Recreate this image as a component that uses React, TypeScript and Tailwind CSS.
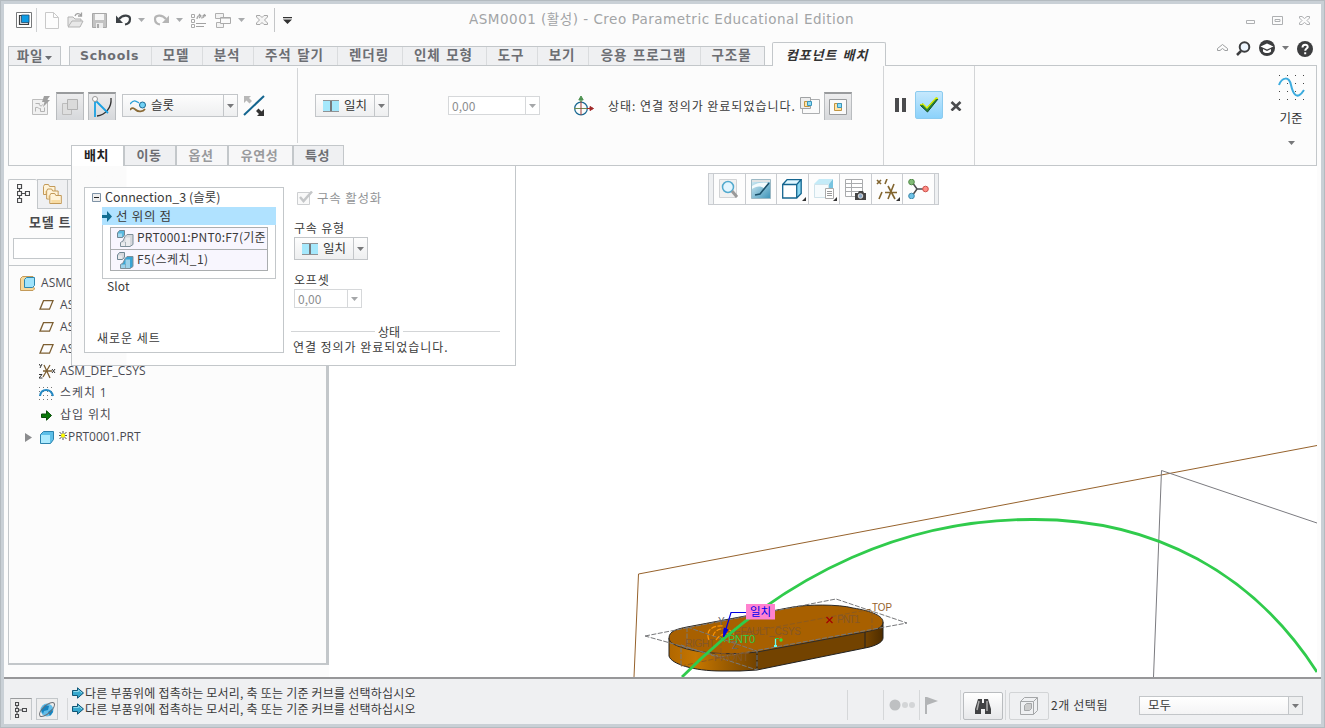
import React from "react";

const KR = "font-['Noto_Sans_CJK_KR',sans-serif]";

type IconProps = { w: number; h: number; className?: string; children: React.ReactNode };
function Icon({ w, h, className = "", children }: IconProps) {
  return (
    <svg width={w} height={h} viewBox={`0 0 ${w} ${h}`} fill="none" className={`shrink-0 ${className}`}>
      {children}
    </svg>
  );
}

function Caret({ color = "#77787a", className = "" }: { color?: string; className?: string }) {
  return (
    <Icon w={7} h={4} className={className}>
      <path d="M0 0h7L3.500 4z" fill={color} />
    </Icon>
  );
}

function QuickAccess() {
  return (
    <div className="flex h-8 items-center">
      <Icon w={16} h={16} className="ml-3">
        <path d="M.5.5h15v15H.5z" stroke="#77797b" fill="#fff" />
        <path d="M3.500 3.500h9v9h-9z" stroke="#3c3e40" strokeWidth="1.200" fill="#d8dadc" />
        <path d="M5.500 3h7.500v7.500H5.500z" fill="#0c9be4" stroke="#1d4d70" strokeWidth=".8" />
      </Icon>
      <div className="ml-1 h-6 w-px bg-[#cfd1d3]" />
      <Icon w={14} h={17} className="ml-2">
        <path d="M.5.5h8l5 5v11H.5z" stroke="#c9c9c9" fill="#fdfdfd" />
        <path d="M8.500.5v5h5" stroke="#c9c9c9" />
      </Icon>
      <Icon w={17} h={16} className="ml-2">
        <path d="M1 14V5h5l2 2h6v2M1 15l4-6h11l-3 6z" stroke="#b3b3b3" fill="#e8e8e8" />
        <path d="M8 4c1-3 4-3 6-1M14.500.5v3.500h-3.500" stroke="#a0a0a0" strokeWidth="1.300" />
      </Icon>
      <Icon w={15} h={15} className="ml-2">
        <path d="M.5.5h14v14H.5z" stroke="#a8a8a8" fill="#c3c3c3" />
        <path d="M3 1h9v6H3z" fill="#f6f6f6" />
        <path d="M4 10h7v5H4z" fill="#eee" />
        <path d="M5 11h2v4H5z" fill="#aaa" />
      </Icon>
      <Icon w={16} h={12} className="ml-[9px]">
        <path d="M3 5c4-5 11-4 11 0 0 3-2 5-5 5.500" stroke="#3c4145" strokeWidth="2.200" />
        <path d="M0 1.500v7.500h7z" fill="#3c4145" />
      </Icon>
      <Caret color="#a9abad" className="ml-[6px]" />
      <Icon w={16} h={12} className="ml-2">
        <path d="M13 5C9 0 2 1 2 5c0 3 2 5 5 5.500" stroke="#b5b5b5" strokeWidth="2.200" />
        <path d="M16 1.500v7.500H9z" fill="#b5b5b5" />
      </Icon>
      <Caret color="#a9abad" className="ml-[7px]" />
      <Icon w={15} h={15} className="ml-[8px]">
        <path d="M.5 1.500h3v3h-3zM.5 6.500h3v3h-3zM.5 11.500h3v3h-3z" stroke="#aaa" />
        <path d="M5 10.500h10M5 13.500h8M6 6c0-3 2-4 4-3M8 1l2 2-2 2M13.500 1.500c0 3-1 3.500-3.500 3.500M11.500 3.500l2-2 2 2" stroke="#a2a2a2" strokeWidth="1.200" />
      </Icon>
      <Icon w={16} h={15} className="ml-[9px]">
        <path d="M.5.5h8v5h-8zM1.500 9.500h7v5h-7z" stroke="#b0b0b0" fill="#f3f3f3" />
        <path d="M5.500 4.500h10v6h-10z" stroke="#aaa" fill="#fafafa" />
        <path d="M6 5.500h9" stroke="#ccc" />
      </Icon>
      <Caret color="#a9abad" className="ml-[7px]" />
      <Icon w={12} h={10} className="ml-[11px]">
        <path d="M.5.5h3.500l2 2 2-2h3.500v1.500L8.500 5l3 3v1.500H8l-2-2-2 2H.5V8l3-3-3-3z" stroke="#a7a7a7" fill="#f5f5f5" />
      </Icon>
      <div className="ml-[6px] h-6 w-px bg-[#c4c6c8]" />
      <Icon w={9} h={7} className="ml-2">
        <path d="M0 0h9v1.200H0zM0 2.500h9L4.500 7z" fill="#333" />
      </Icon>
    </div>
  );
}

function TitleBar() {
  return (
    <div className="flex h-[38px] shrink-0">
      <div className="w-[465px]"><QuickAccess /></div>
      <div className="h-8 whitespace-nowrap font-['DejaVu_Sans','Noto_Sans_CJK_KR',sans-serif] text-[13.5px] leading-[31px] tracking-[0.5px] text-[#a2a4a6]">
        ASM0001 (활성) - Creo Parametric Educational Edition
      </div>
      <div className="ml-auto mr-[11px] flex h-8 items-center">
        <Icon w={10} h={10}><path d="M.5 5.500h8v3h-8z" stroke="#aeb0b2" /></Icon>
        <Icon w={11} h={9} className="ml-4"><path d="M.5.5h10v8H.5zM3 3.500h5v2H3z" stroke="#aeb0b2" /></Icon>
        <Icon w={11} h={9} className="ml-4">
          <path d="M.5.5H3l2.500 2L8 .5h2.500v1.500L8 4.500l2.500 2.500v1.500H8l-2.500-2-2.500 2H.5V7L3 4.500.5 2z" stroke="#aeb0b2" />
        </Icon>
      </div>
    </div>
  );
}

const tabs: [string, string][] = [
  ["Schools", "w-[81px]"],
  ["모델", "w-[51px]"],
  ["분석", "w-[51px]"],
  ["주석 달기", "w-[84px]"],
  ["렌더링", "w-[65px]"],
  ["인체 모형", "w-[84px]"],
  ["도구", "w-[51px]"],
  ["보기", "w-[51px]"],
  ["응용 프로그램", "w-[112px]"],
  ["구조물", "w-[64px]"],
];

function TabRow() {
  return (
    <div className="z-10 -mb-px ml-1 flex h-6 shrink-0 items-end whitespace-nowrap font-['DejaVu_Sans','Noto_Sans_CJK_KR',sans-serif] text-[13.5px] font-bold tracking-[0.9px] text-[#6c6e73]">
      <div className="flex h-5 w-[53px] items-center justify-center gap-[2px] border border-[#c3c7ca] bg-[#eff0f2] leading-[18px]">
        파일 <Caret color="#6c6e73" className="mt-[3px]" />
      </div>
      <div className="ml-2 flex h-5 border border-[#c3c7ca] bg-[#eff0f2]">
        {tabs.map(([t, w], i) => (
          <div key={t} className={`${w} pr-[2px] text-center leading-[17px] ${i ? "border-l border-[#dadcde]" : "text-[12.5px] tracking-[0.7px]"}`}>{t}</div>
        ))}
      </div>
      <div className="ml-[7px] h-6 w-[114px] rounded-t-[2px] border border-b-0 border-[#c3c7ca] bg-[#fcfcfc] pr-1 text-center text-[13px] italic leading-[25px] text-[#333]">
        컴포넌트 배치
      </div>
      <div className="mb-[10px] ml-auto mr-2 flex h-4 items-center">
        <Icon w={11} h={7} className="mb-[2px]"><path d="M.5 6.500v-2l5-4 5 4v2H8l-2.500-2-2.500 2z" stroke="#9d9fa1" /></Icon>
        <Icon w={15} h={15} className="ml-2">
          <circle cx="8.500" cy="6" r="4.800" stroke="#3c3d3f" strokeWidth="2" fill="#eef6ff" />
          <path d="M5 10l-4 4" stroke="#3c3d3f" strokeWidth="2.500" />
        </Icon>
        <Icon w={16} h={16} className="ml-2">
          <circle cx="8" cy="8" r="8" fill="#3c3d3f" />
          <path d="M1.500 6.500L8 3.500l6.500 3L8 9.500zM4 9v2.500c2 2 6 2 8 0V9L8 11z" fill="#fff" />
        </Icon>
        <Caret className="ml-[7px]" />
        <Icon w={16} h={16} className="ml-2 mt-[2px]">
          <circle cx="8" cy="8" r="8" fill="#3c3d3f" />
          <path d="M5.500 6.500c0-4 5.500-3.500 5.200-.5C10.500 7.500 8.200 7.800 8.200 9.800M8.200 11.200v2" stroke="#fff" strokeWidth="2" />
        </Icon>
      </div>
    </div>
  );
}

function MatchIcon() {
  return (
    <Icon w={16} h={12}>
      <path d="M0 0h16v12H0z" fill="#a5e8fc" />
      <path d="M0 .5h16M0 11.500h16" stroke="#909294" />
      <path d="M8 1v10" stroke="#76797c" strokeWidth="2" />
    </Icon>
  );
}

function Combo({ w, icon, text }: { w: string; icon: React.ReactNode; text: string }) {
  return (
    <div className={`flex h-[23px] shrink-0 ${w} items-center whitespace-nowrap border border-[#c3c6c9] bg-linear-to-b from-[#fdfdfd] to-[#eeeff0] pl-[7px] text-[12.5px] leading-5 text-[#333]`}>
      {icon}
      <span className="-mt-px ml-[5px]">{text}</span>
      <span className="ml-auto flex h-full w-[14px] items-center justify-center border-l border-[#c3c6c9]"><Caret /></span>
    </div>
  );
}

function NumberField({ w }: { w: string }) {
  return (
    <div className={`flex h-[19px] shrink-0 ${w} items-center border border-[#d6d8da] bg-white pl-[3px] text-[12px] leading-4 text-[#8c8e90]`}>
      0,00
      <span className="ml-auto flex h-full w-[14px] items-center justify-center border-l border-[#d6d8da]"><Caret color="#a5a7a9" /></span>
    </div>
  );
}

const pressed = "flex h-7 w-7 shrink-0 items-center justify-center border border-t-2 border-b-0 border-[#b9bcbf] border-t-[#999b9d] bg-linear-to-b from-[#ededee] to-[#d6d8db]";

const subTabs: [string, string][] = [
  ["배치", "w-[52px] bg-white text-[#222]"],
  ["이동", "w-[52px] bg-[#eff0f2] text-[#6c6e73]"],
  ["옵션", "w-[52px] bg-[#f7f7f8] text-[#999a9d]"],
  ["유연성", "w-[65px] bg-[#f7f7f8] text-[#999a9d]"],
  ["특성", "w-[52px] bg-[#eff0f2] text-[#6c6e73]"],
];

function Ribbon() {
  return (
    <div className="mx-1 flex h-[101px] shrink-0 border border-[#c3c7ca]">
      <div className="flex w-[874px] flex-col">
        <div className="flex h-[79px] items-center">
          <Icon w={20} h={21} className="ml-[22px]">
            <path d="M1.500 4.500h15v15h-15z" fill="#f1f1f1" stroke="#bdbdbd" />
            <path d="M4.500 8.500h4c-1 3 3 3 3 1M4.500 16.500v-4c3-1 3 2 5 1v3h4v-4" stroke="#b3b3b3" />
            <path d="M13 1h6l-3 4h3l-7 7 1.500-5H11z" fill="#a0a0a0" />
          </Icon>
          <div className={`ml-[5px] ${pressed}`}>
            <Icon w={18} h={18}>
              <path d="M1.500 5.500h9v11h-9z" stroke="#bcbcbc" fill="#dedede" />
              <path d="M6.500 1.500h10v10h-10z" stroke="#b2b2b2" fill="#dadada" />
            </Icon>
          </div>
          <div className={`ml-1 ${pressed}`}>
            <Icon w={22} h={22}>
              <path d="M20 2c1 10-6 17-14 18" stroke="#333" strokeWidth="1.300" />
              <path d="M4 4v17M4 4l13 13" stroke="#1ba1e2" strokeWidth="1.800" />
              <circle cx="4" cy="3" r="2.500" stroke="#999" fill="#fff" />
            </Icon>
          </div>
          <div className="ml-[6px]">
            <Combo w="w-[116px]" text="슬롯" icon={
              <Icon w={16} h={14}>
                <path d="M0 5c4-5 6-3 9-1" stroke="#2aa0d8" strokeWidth="1.300" />
                <circle cx="12.500" cy="6" r="3" fill="#71d2f6" stroke="#1b6a94" />
                <path d="M0 11c2-3 4-2 6 0s7 2 9-1" stroke="#8a6a35" strokeWidth="1.800" />
              </Icon>} />
          </div>
          <Icon w={22} h={22} className="ml-[5px]">
            <path d="M1 20L21 1" stroke="#14658f" strokeWidth="2" />
            <path d="M1 1h7L6 3l3 3-2.500 2.500L3.500 5.500 1 8z" fill="#b8b8b8" />
            <path d="M21 21h-7l2-2-3-3 2.500-2.500L18.500 16.500l2.500-2.500z" fill="#333" />
          </Icon>
          <div className="ml-8 h-[75px] w-px bg-[#d3d5d7]" />
          <div className="ml-[17px]"><Combo w="w-[74px]" text="일치" icon={<MatchIcon />} /></div>
          <div className="ml-[59px]"><NumberField w="w-[92px]" /></div>
          <Icon w={22} h={22} className="ml-[33px]">
            <circle cx="8" cy="13.500" r="6.300" stroke="#1b6a94" strokeWidth="1.300" />
            <path d="M1 13.500h15" stroke="#6f8c50" /><path d="M8 20V6" stroke="#a03b32" />
            <path d="M8 4v3M5.800 5L8 1l2.200 4z" fill="#4d9150" stroke="#4d9150" />
            <path d="M14 13.500h3m0-2l3.500 2-3.500 2z" fill="#a02828" stroke="#a02828" />
          </Icon>
          <span className="ml-[13px] w-[192px] whitespace-nowrap text-[12px] leading-5 tracking-[0.97px] text-[#3a3a3a]">상태: 연결 정의가 완료되었습니다.</span>
          <Icon w={20} h={18}>
            <path d="M2.500 2.500h17v14h-17z" stroke="#acaeb0" fill="#fafafa" />
            <path d="M.5.5h10v11H.5z" stroke="#a0a2a4" fill="#eee" />
            <path d="M4.500 4.500h5v5h-5z" fill="#ffe3a8" stroke="#c09540" />
            <path d="M7.500 4.500h4v4h-4z" fill="#8ddcf8" stroke="#3b95bb" />
          </Icon>
          <div className={`ml-1 ${pressed}`}>
            <Icon w={18} h={16}>
              <path d="M.5.5h17v15H.5z" stroke="#999b9d" fill="#fafafa" />
              <path d="M5.500 4.500h7v7h-7z" fill="#ffe3a8" stroke="#c09540" />
              <path d="M8.500 4.500h4v4h-4z" fill="#8ddcf8" stroke="#3b95bb" />
            </Icon>
          </div>
        </div>
        <div className="ml-[62px] flex h-5 whitespace-nowrap text-[13px] font-bold leading-[18px] tracking-[0.6px]">
          {subTabs.map(([t, c], i) => (
            <div key={t} className={`${c} h-5 border-t border-[#c3c7ca] pr-[2px] text-center ${i ? "border-l-2" : "border-l"} ${i === 4 ? "border-r" : ""}`}>{t}</div>
          ))}
        </div>
      </div>
      <div className="flex w-[92px] border-x border-[#d3d5d7] pl-[11px] pt-[25px]">
        <Icon w={11} h={14} className="mt-[7px]"><path d="M0 0h4v14H0zM7 0h4v14H7z" fill="#4a4b4d" /></Icon>
        <div className="ml-[9px] flex h-7 w-7 items-center justify-center rounded-[2px] border border-[#8ccbef] bg-linear-to-b from-[#c5e8fd] to-[#8bd2fb]">
          <Icon w={20} h={16}>
            <path d="M1 8l3-1 4 4L17 1l2 1L8.500 15z" fill="#28843c" stroke="#134d24" />
            <path d="M1 8l3-1 4 4L17 1l2 .5" stroke="#dcf000" strokeWidth="1.300" />
          </Icon>
        </div>
        <Icon w={12} h={10} className="ml-[7px] mt-[10px]"><path d="M1.500 1l9 8.500M10.500 1l-9 8.500" stroke="#4a4b4d" strokeWidth="2.600" /></Icon>
      </div>
      <div className="ml-auto mr-[9px] flex w-[32px] flex-col items-center pt-[8px]">
        <Icon w={27} h={28}>
          {[1, 9, 17, 25].map((y) => [1, 9, 17, 25].map((x) => <path key={`${x}-${y}`} d={`M${x} ${y}h1v1h-1z`} fill="#444" />))}
          <path d="M1 11C4 3 11 2 13 11s6 16 13 5" stroke="#3cacdf" strokeWidth="2" />
        </Icon>
        <span className="mt-[6px] whitespace-nowrap text-[12.5px] leading-5 text-[#333]">기준</span>
        <Caret className="mt-[13px]" />
      </div>
    </div>
  );
}

function TreeGlyph({ className = "" }: { className?: string }) {
  return (
    <Icon w={13} h={19} className={className}>
      <path d="M.5.5h4v4h-4zM.5 7.500h4v4h-4zM.5 14.500h4v4h-4zM8.500 7.500h4v4h-4zM2.500 4.500v3M2.500 11.500v3M4.500 9.500h4" stroke="#4a4b4d" strokeWidth="1.200" />
    </Icon>
  );
}

const PlaneIcon = () => <Icon w={15} h={10}><path d="M4.500.7h9.500l-3.500 8.500H1z" stroke="#7d5f32" strokeWidth="1.300" /></Icon>;

function TreeRow({ icon, label, pl, tight }: { icon: React.ReactNode; label: string; pl: string; tight?: boolean }) {
  return (
    <div className={`flex h-[22px] items-center whitespace-nowrap ${pl}`}>
      <span className={`flex shrink-0 items-center ${tight ? "" : "w-[21px]"}`}>{icon}</span>
      <span>{label}</span>
    </div>
  );
}

function ModelTree() {
  return (
    <div className="flex w-[325px] shrink-0 flex-col bg-[#fcfcfc] pl-1 pt-[13px]">
      <div className="flex h-[31px]">
        <div className="flex w-[29px] justify-center rounded-t-[2px] border-l border-t border-[#c3c7ca] pt-1"><TreeGlyph /></div>
        <div className="flex h-[30px] w-[31px] items-center justify-center border border-[#c3c7ca] bg-[#eff0f2]">
          <Icon w={20} h={20}>
            {[0, 4.500, 9].map((d) => (
              <g key={d}>
                <path d={`M${d * 0.7 + 0.5} ${d + 2.500}l1-2h4l1 2h5.500v8h-11.500z`} fill="#fff3d8" stroke="#c39a59" />
                <path d={`M${d * 0.7 + 2} ${d + 7}h9v3h-9z`} fill="#f8dca4" />
              </g>
            ))}
          </Icon>
        </div>
        <div className="h-[30px] w-[31px] border-b border-t border-[#c3c7ca] bg-[#eff0f2]" />
      </div>
      <div className="flex h-[455px] w-[321px] flex-col border-b-2 border-l border-r-[3px] border-[#c3c7ca]">
        <div className="h-[55px]">
          <div className="ml-[20px] whitespace-nowrap text-[13px] font-bold leading-6 tracking-[0.9px] text-[#4a4b4d]">모델 트리</div>
          <div className="ml-1 mt-[4px] h-[21px] w-[290px] border border-[#c3c7ca] bg-white" />
        </div>
        <div className="border-t border-[#c3c7ca] pt-[6px] font-['Open_Sans','Noto_Sans_CJK_KR',sans-serif] text-[12px] tracking-[0.1px] text-[#4a4a52]">
          <TreeRow pl="pl-[11px]" label="ASM0001.ASM" icon={
            <Icon w={15} h={15} className="mr-[5px]">
              <path d="M.5 2.500l2-2h10.500v11l2 1-2 2H.5z" fill="#f6d99c" stroke="#c39a59" />
              <path d="M4.500 3.500l2-2h8v8l-2 2h-8z" fill="#9fe3fb" stroke="#2e87ae" />
            </Icon>} />
          <TreeRow pl="pl-[30px]" label="ASM_RIGHT" icon={<PlaneIcon />} />
          <TreeRow pl="pl-[30px]" label="ASM_TOP" icon={<PlaneIcon />} />
          <TreeRow pl="pl-[30px]" label="ASM_FRONT" icon={<PlaneIcon />} />
          <TreeRow pl="pl-[30px]" label="ASM_DEF_CSYS" icon={
            <Icon w={17} h={16}>
              <path d="M4 8h9M5 2l6 13M11 2L4 14" stroke="#7d5f32" strokeWidth="1.300" />
              <path d="M0 1l1.500 2M3 1L1 5M0 11.500h3L0 15h3.500M13 6l3 4M16 6l-3 4" stroke="#333" />
            </Icon>} />
          <div className="tracking-[0.9px]">
            <TreeRow pl="pl-[30px]" label="스케치 1" icon={
              <Icon w={15} h={13}>
                <path d="M0 .5h15M0 4.500h15M0 8.500h15M0 12.500h15" stroke="#777" strokeDasharray="1 3" />
                <path d="M1 9C2 1 12 1 14 9" stroke="#2489c4" strokeWidth="2" />
              </Icon>} />
            <TreeRow pl="pl-[30px]" label="삽입 위치" icon={<Icon w={11} h={11} className="ml-[2px]"><path d="M.5 4h5V.8l5 4.700-5 4.700V7.500h-5z" fill="#087808" stroke="#0a4b0a" /></Icon>} />
          </div>
          <TreeRow pl="pl-4 tracking-[-0.05px]" label="PRT0001.PRT" tight icon={
            <>
              <Icon w={7} h={9}><path d="M0 0l7 4.500L0 9z" fill="#8b8c8e" /></Icon>
              <Icon w={14} h={13} className="ml-2"><path d="M.5 3.500l3-3h10v8l-3 4H.5z" fill="#5dbfe8" stroke="#2d83ad" /><path d="M1 4h9v8H1z" fill="#adeafd" /></Icon>
              <Icon w={8} h={9} className="mb-[3px] ml-[5px] mr-[1px]"><path d="M.5 1l7 7M7.500 1l-7 7M4 0v9M0 4.500h8" stroke="#555" /><circle cx="4" cy="4.500" r="2" fill="#ff0" /></Icon>
            </>} />
        </div>
      </div>
    </div>
  );
}

function PartPair({ a, b }: { a: string; b: string }) {
  return (
    <Icon w={17} h={17} className="ml-[6px] mr-[3px]">
      <path d="M.5 3l2-2.500h5V5l-2 2.500h-5z" fill={a} stroke="#6f8793" />
      <path d="M1 3.500h4V7H1z" fill="#fff" fillOpacity=".45" />
      <path d="M3.500 16.500v-4l2.500-1.500 2-4.500 2-2h6v10l-3 2z" fill={b} stroke="#7d8f99" />
      <path d="M4 12.500h4.500v-5H13V16H4z" fill="#fff" fillOpacity=".5" />
      <path d="M8.500 12v4" stroke="#7d8f99" strokeOpacity=".6" />
    </Icon>
  );
}

function PlacementPanel() {
  return (
    <div className="absolute left-[70px] top-[164px] z-20 flex h-[201px] w-[445px] border border-[#c3c7ca] bg-linear-to-r from-[#fbfbfb] from-[54px] to-white to-[55px] text-[12px] text-[#3a3a3a]">
      <div className="absolute -top-px left-0 h-px w-[51px] bg-white" />
      <div className="ml-3 mt-[21px] flex h-[166px] w-[200px] flex-col border border-[#c3c7ca] bg-white">
        <div className="flex h-[19px] items-center whitespace-nowrap pl-[7px] leading-[17px]">
          <Icon w={9} h={9}><path d="M.5.5h8v8h-8z" stroke="#7f93a6" fill="#eee" /><path d="M2 4.500h5" stroke="#222" /></Icon>
          <span className="-mt-[2px] ml-[4px] text-[12.5px]">Connection_3 (슬롯)</span>
        </div>
        <div className="ml-[17px] flex h-[72px] w-[174px] flex-col border border-t-0 border-[#c3c7ca]">
          <div className="-ml-px -mr-px flex h-[18px] shrink-0 items-center bg-[#b0e2ff] text-[12.5px] leading-[16px] tracking-[0.7px]">
            <Icon w={10} h={11}><path d="M0 4h5V0l5 5.500L5 11V7H0z" fill="#126d91" /></Icon>
            <span className="-mt-px ml-1">선 위의 점</span>
          </div>
          <div className="mx-[7px] mt-[2px] border border-[#aaadaf] bg-[#f8f6fe]">
            <div className="flex h-[21px] items-center overflow-hidden whitespace-nowrap leading-5 tracking-[0.2px]"><PartPair a="#58b9df" b="#d5d8dc" /><span className="-mt-[3px]">PRT0001:PNT0:F7(기준</span></div>
            <div className="flex h-[21px] items-center whitespace-nowrap border-t border-[#aaadaf] leading-5 tracking-[0.4px]"><PartPair a="#d5d8dc" b="#39a5d4" /><span className="-mt-[2px]">F5(스케치_1)</span></div>
          </div>
        </div>
        <div className="ml-[22px] leading-[14px] tracking-[0.1px]">Slot</div>
        <div className="ml-3 mt-auto pb-[4px] leading-5 tracking-[1px]">새로운 세트</div>
      </div>
      <div className="ml-[7px] mt-[21px] w-[209px] whitespace-nowrap tracking-[0.8px]">
        <div className="ml-[6px] flex h-[22px] items-center text-[#939597]">
          <Icon w={16} h={14}><path d="M.5 1.500h12v12H.5z" stroke="#cdcfd1" fill="#f9f9f9" /><path d="M3 6l3.500 4L15 .5" stroke="#c5c7c9" strokeWidth="2.500" /></Icon>
          <span className="ml-1 text-[12.500px] leading-5">구속 활성화</span>
        </div>
        <div className="ml-[3px] mt-[10px] h-[18px] leading-[18px]">구속 유형</div>
        <div className="ml-[3px] tracking-normal"><Combo w="w-[74px]" text="일치" icon={<MatchIcon />} /></div>
        <div className="ml-[3px] mt-[11px] h-[18px] leading-[18px]">오프셋</div>
        <div className="ml-[3px] tracking-normal"><NumberField w="w-[68px]" /></div>
        <div className="mt-[15px] flex h-[17px] items-center leading-[17px]">
          <div className="h-px w-[84px] bg-[#d3d5d7]" />
          <span className="mx-[3px] tracking-normal">상태</span>
          <div className="h-px flex-1 bg-[#d3d5d7]" />
        </div>
        <div className="ml-[2px] leading-[14px] tracking-[0.95px]">연결 정의가 완료되었습니다.</div>
      </div>
    </div>
  );
}

function ViewToolbar() {
  const cell = "relative flex w-[31.500px] items-center justify-center border-r border-[#c9ccd0] bg-[#fdfdfd]";
  const corner = <Icon w={4} h={4} className="absolute bottom-[3px] right-[2px]"><path d="M4 0v4H0z" fill="#333" /></Icon>;
  return (
    <div className="absolute left-[379px] top-[7px] flex h-[32px] w-[231px] border border-[#c9ccd0] bg-[#eef0f2]">
      <div className="w-[5px] border-r border-[#c9ccd0]" />
      <div className={cell}>
        <Icon w={20} h={20}><path d="M.5.5h17v18H.5z" fill="#f1f1f1" stroke="#d1d3d5" /><circle cx="9" cy="8" r="5.500" fill="#e4f6ff" stroke="#53aace" strokeWidth="1.500" /><path d="M13 12l5 6" stroke="#999" strokeWidth="3" /></Icon>
      </div>
      <div className={cell}>
        <Icon w={20} h={20}>
          <defs><linearGradient id="shade" x1="0" y1="0" x2="1" y2="1"><stop offset="0" stopColor="#d6eef6" /><stop offset="1" stopColor="#3d93b8" /></linearGradient></defs>
          <path d="M.5.5h19v19H.5z" fill="url(#shade)" stroke="#9cb9c5" /><path d="M1 1h18v2H1z" fill="#e1e3e4" />
          <path d="M1 7C6 3.500 13 3 18 4L13 9.500C10 6.500 5 7 1 10z" fill="#f4fbfd" /><path d="M18 4L9 15l-5 1" stroke="#1b4f68" strokeWidth="1.600" />
        </Icon>
      </div>
      <div className={cell}>
        <Icon w={20} h={20}><path d="M.7 5.500h14v13.500H.7z" fill="#fff" /><path d="M.7 5.500l4.500-5h14l-4.500 5z" fill="#dff7ff" /><path d="M14.700 5.500l4.500-5v14l-4.500 4.500z" fill="#8bd8f2" /><path d="M.7 5.500h14v13.500H.7zM.7 5.500l4.500-5h14l-4.500 5M19.200.5v14l-4.500 4.500" stroke="#14658f" strokeWidth="1.300" /></Icon>
        {corner}
      </div>
      <div className={cell}>
        <Icon w={20} h={20}><path d="M.5 5.500h14v13H.5z" fill="#f6fbfd" stroke="#cfe3eb" /><path d="M0 5l5-5h14l-4 5z" fill="#c4ebf8" /><path d="M15 5l4-5v14l-4 5z" fill="#78c4e0" /><path d="M11.500 9.500h8v10h-8z" fill="#fff" stroke="#aaa" /><path d="M13 12.500h5M13 14.500h5M13 16.500h5" stroke="#999" /></Icon>
        {corner}
      </div>
      <div className={cell}>
        <Icon w={21} h={21}><path d="M.5.5h17v17H.5zM.5 4.500h17M.5 8.500h17M.5 12.500h17M6.500.5v17" stroke="#a9abad" fill="#fff" /><path d="M10 14h3l1-2h4l1 2h2v7H10z" fill="#444" /><circle cx="15.500" cy="17" r="2.300" fill="#8aa8c8" stroke="#ddd" /></Icon>
      </div>
      <div className={cell}>
        <Icon w={21} h={21}><path d="M1 1l4 4M5 1L1 5M11 0L9 5M6 13l-3 7M12 7l7 13M18 5l-6 15M9 13.500h12" stroke="#82652f" strokeWidth="1.600" /></Icon>
        {corner}
      </div>
      <div className={cell}>
        <Icon w={21} h={20}><path d="M4 3l5 7h8M9 10l-5 7" stroke="#4a4b4d" strokeWidth="1.500" /><circle cx="3.500" cy="3" r="2.800" fill="#82bb77" stroke="#538b49" /><circle cx="17.500" cy="10" r="2.800" fill="#ff8d86" stroke="#cb5049" /><circle cx="3.500" cy="17" r="2.800" fill="#6dc2e7" stroke="#3f89ab" /></Icon>
      </div>
    </div>
  );
}

function Viewport() {
  return (
    <div className="relative w-[988px] shrink-0 bg-white">
      <svg width="988" height="511" viewBox="329 166 988 511" fill="none" className="block font-['Liberation_Sans','Noto_Sans_CJK_KR',sans-serif]">
        <defs>
          <linearGradient id="side" gradientUnits="userSpaceOnUse" x1="668" y1="0" x2="883" y2="0">
            <stop offset="0" stopColor="#b06600" /><stop offset=".13" stopColor="#c57600" /><stop offset=".41" stopColor="#734300" />
            <stop offset=".92" stopColor="#734300" /><stop offset="1" stopColor="#4d2c00" />
          </linearGradient>
        </defs>
        <path d="M634 677L638.500 574 1317 445.500" stroke="#96622c" />
        <path d="M1153.500 677L1161.500 470.500 1317 523" stroke="#7b7b80" />
        <path d="M669 638v18c2 8 25 15 52 15h19l17-1 108-22c11-2 18-6 18-10v-16z" fill="url(#side)" stroke="#222" />
        <path d="M669 638C669 631 677 629 687 627L793 607C807 604.500 838 604 853 608C872 611 883 616 883 622C883 628 876 630 865 632L757 652C735 655 705 654 687 649C676 646 669 643 669 638Z" fill="#a86000" stroke="#2b2b2b" />
        <path d="M757 652v18M865 632v16" stroke="#222" />
        <path d="M645 636L836 599 907 623 721 657zM687 627v22M687 627L757 651v19L681 645v22" stroke="#77787b" strokeDasharray="5 1.500" />
        <path d="M681 666L757 650M728 636l144-27M721 620v34M872 611v20" stroke="#8d5a1e" strokeDasharray="5 2" />
        <g fill="#855727" fontSize="10.500">
          <text x="685" y="647" textLength="30">RIGHT</text><text x="734" y="635" fontSize="10" textLength="67">EFAULT_CSYS</text><text x="837" y="623" textLength="23">PNT1</text><text x="714" y="661" textLength="35">FRONT</text>
        </g>
        <path d="M709 640c-4-9 3-15 14-14M713 636c2-8 12-9 18-5M716 640c4-6 10-8 18-6" stroke="#ff9300" strokeWidth="1.200" strokeDasharray="5 1.500" />
        <path d="M682 677C790 569 910 519 1033 519.500C1155 519 1254 574 1317 672" stroke="#30cb4c" strokeWidth="2.800" />
        <path d="M746 612.500h-15l-7 23" stroke="#0000e0" strokeWidth="1.200" />
        <path d="M723.500 637l.5-9 4 1.500z" fill="#0000e0" stroke="#0000e0" />
        <text x="718" y="625" fontSize="10" fill="#66676a">Y</text><text x="732" y="649" fontSize="10" fill="#66676a">Z</text>
        <text x="728" y="643" fontSize="11" fill="#30cb4c" textLength="27">PNT0</text>
        <path d="M720 637l5 5M725 637l-5 5" stroke="#30cb4c" />
        <path d="M826.500 617l6 6M832.500 617l-6 6" stroke="#a40000" strokeWidth="1.200" />
        <path d="M775.500 646v-7.500" stroke="#68fff0" strokeWidth="1.300" /><path d="M775 638.500h4" stroke="#30cb4c" /><circle cx="781" cy="640" r="1.700" fill="#34e434" /><path d="M779 638l3-1" stroke="#e04820" /><path d="M774 646h3" stroke="#68fff0" strokeWidth="2" />
        <text x="872" y="611" fontSize="11" fill="#96622c" textLength="20" lengthAdjust="spacingAndGlyphs">TOP</text>
        <path d="M746 604h29v15.500h-29z" fill="#ff82cf" />
        <text x="750" y="616" fontSize="11.500" fill="#0000ee">일치</text>
      </svg>
      <ViewToolbar />
    </div>
  );
}

function StatusMessage() {
  return (
    <div className="flex h-4 items-center whitespace-nowrap leading-4">
      <Icon w={12} h={12}><path d="M.5 3.500h5V.8l6 5.200-6 5.200V8.500h-5z" fill="#36a8ce" stroke="#105676" /><path d="M1.500 4.500h5V3L10 6" stroke="#91dbed" /></Icon>
      <span className="ml-px">다른 부품위에 접촉하는 모서리, 축 또는 기준 커브를 선택하십시오</span>
    </div>
  );
}

function StatusBar() {
  const rule = "h-[30px] w-px shrink-0 bg-[#d5d7d9]";
  return (
    <div className="flex h-[47px] shrink-0 items-end border-t-2 border-[#979799] bg-[#eff0f2] pb-1 text-[12px] text-[#3a3a3a]">
      <div className="ml-[6px] flex h-[22px] w-[22px] items-center justify-center border border-b-0 border-[#c3c7ca] border-t-[#999b9d] bg-[#eee]"><Icon w={12} h={16}><path d="M.5.5h3v3h-3zM.5 6.500h3v3h-3zM.5 12.500h3v3h-3zM7.500 6.500h4v3h-4zM2 3.500v3M2 9.500v3M3.500 8h4" stroke="#4a4b4d" strokeWidth="1.100" /></Icon></div>
      <div className="ml-1 flex h-[22px] w-[22px] items-center justify-center border border-[#c3c7ca] bg-[#eee]">
        <Icon w={18} h={17}>
          <circle cx="9" cy="9" r="6.500" fill="#63bde8" /><path d="M3 9l4-5 4 1-1 4-4 1-1 3zM10 11l4-3 1 3-3 4z" fill="#1583bf" />
          <ellipse cx="9" cy="8.500" rx="9.500" ry="4" transform="rotate(-42 9 8.500)" stroke="#6c7076" />
        </Icon>
      </div>
      <div className="ml-[9px] h-[22px] w-px bg-[#d5d7d9]" />
      <div className="mb-[3px] ml-1 w-[775px] tracking-[0.22px]"><StatusMessage /><StatusMessage /></div>
      <div className={rule} />
      <div className={`ml-[35px] ${rule}`} />
      <Icon w={26} h={12} className="mb-[9px] ml-[5px]"><circle cx="6" cy="6" r="5.500" fill="#bec0c2" /><circle cx="16" cy="6" r="3" fill="#d3d5d7" /><circle cx="23" cy="6" r="3" fill="#d3d5d7" /></Icon>
      <div className={`ml-1 ${rule}`} />
      <Icon w={13} h={17} className="mb-[6px] ml-[5px]"><path d="M0 0h2v17H0zM2 0l11 4-11 4z" fill="#b2b4b6" /></Icon>
      <div className={`ml-[22px] ${rule}`} />
      <div className="ml-[2px] flex h-7 w-10 items-center justify-center rounded-[2px] border border-[#b9bcbf] bg-linear-to-b from-white to-[#e7e8ea]">
        <Icon w={16} h={15}><path d="M3 0h4v4h2V0h4l3 10v5h-6v-5H6v5H0v-5z" fill="#414244" /><path d="M4 2L2 11M12 2v10" stroke="#aaa" strokeWidth="1.500" /></Icon>
      </div>
      <div className={`ml-[2px] ${rule}`} />
      <div className="ml-[3px] flex h-7 w-10 items-center justify-center rounded-[2px] border border-[#d2d4d6]">
        <Icon w={18} h={18}><path d="M.5 4.500h13v13H.5zM.5 4.500l4-4h13v13l-4 4M13.500 4.500l4-4" stroke="#a5a7a9" /><path d="M4.500 8.500l2-2h5v5l-2 2h-5z" stroke="#a5a7a9" fill="#ccc" /></Icon>
      </div>
      <span className="ml-[2px] w-[88px] whitespace-nowrap pb-[5px] leading-5 tracking-[0.6px]">2개 선택됨</span>
      <div className="mb-[5px] flex h-[19px] w-[164px] items-center border border-[#c3c6c9] bg-linear-to-b from-white to-[#f4f4f5] pl-2 text-[12.5px] leading-4">
        <span className="-mt-[2px]">모두</span><span className="ml-auto flex h-full w-[14px] items-center justify-center border-l border-[#c3c6c9] bg-[#eeeff0]"><Caret /></span>
      </div>
    </div>
  );
}

export default function App() {
  return (
    <div className={`relative box-border flex h-[728px] w-[1325px] flex-col overflow-hidden border border-[#b4bbc0] bg-[#c9d0d6] p-[3px] ${KR}`}>
      <div className="flex min-h-0 flex-1 flex-col bg-[#fcfcfc]">
        <TitleBar />
        <TabRow />
        <Ribbon />
        <div className="flex h-[511px] shrink-0">
          <ModelTree />
          <Viewport />
        </div>
        <StatusBar />
      </div>
      <PlacementPanel />
    </div>
  );
}
